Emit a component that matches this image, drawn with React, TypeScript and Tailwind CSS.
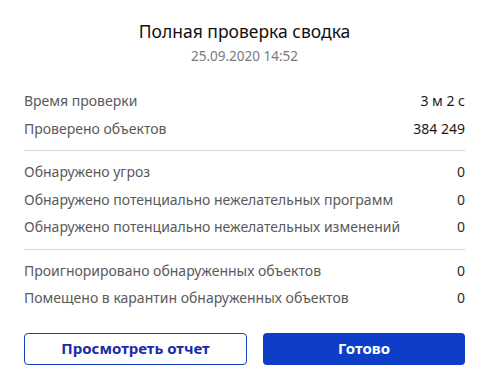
import React from "react";

const Row = ({ label, value, dark }: { label: string; value: string; dark?: boolean }) => (
  <div className="flex items-center justify-between h-[27.5px]">
    <span className="text-[#5a5a5a]">{label}</span>
    <span className={dark ? "text-[#1a1a1a]" : "text-[#2a2a2a]"}>{value}</span>
  </div>
);

export default function App() {
  return (
    <div
      className="w-[483px] h-[385px] bg-white pl-[24px] pr-[18px] pt-[18px] text-[14px] overflow-hidden"
      style={{ fontFamily: '"Noto Sans", "Open Sans", sans-serif' }}
    >
      <div className="text-center text-[17.5px] leading-[26px] text-[#111]">Полная проверка сводка</div>
      <div className="text-center text-[13.5px] leading-[20px] text-[#7a7a7a] mt-[2px]">25.09.2020 14:52</div>
      <div className="mt-[21px]">
        <Row label="Время проверки" value="3 м 2 с" dark />
        <Row label="Проверено объектов" value="384 249" dark />
      </div>
      <div className="h-px bg-[#d4d4d8] mt-[8px] mb-[7px]" />
      <div>
        <Row label="Обнаружено угроз" value="0" />
        <Row label="Обнаружено потенциально нежелательных программ" value="0" />
        <Row label="Обнаружено потенциально нежелательных изменений" value="0" />
      </div>
      <div className="h-px bg-[#d4d4d8] mt-[8px] mb-[7px]" />
      <div>
        <Row label="Проигнорировано обнаруженных объектов" value="0" />
        <Row label="Помещено в карантин обнаруженных объектов" value="0" />
      </div>
      <div className="flex gap-[16px] mt-[21px]">
        <button className="w-[223px] h-[32px] rounded-[4px] border border-[#1240c8] text-[#1a2aa8] font-bold text-[15px]">
          Просмотреть отчет
        </button>
        <button className="flex-1 h-[32px] rounded-[4px] bg-[#0e3ec8] text-white font-bold text-[15px]">
          Готово
        </button>
      </div>
    </div>
  );
}
